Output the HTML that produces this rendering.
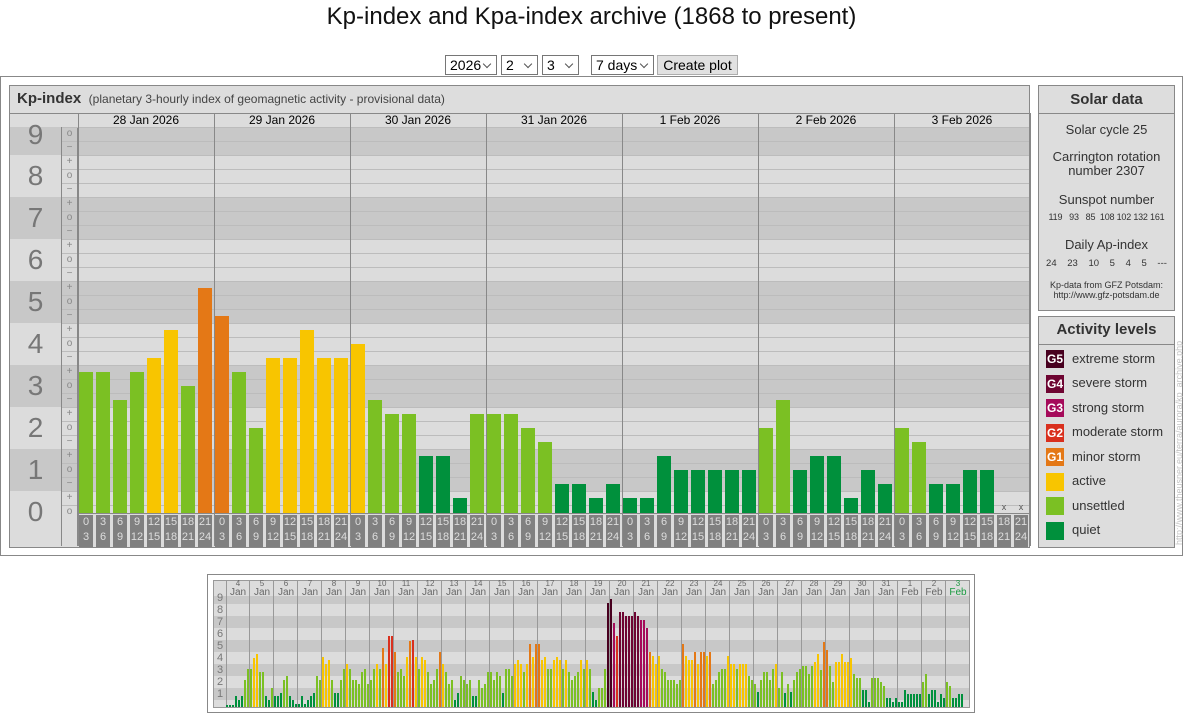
<!DOCTYPE html>
<html><head><meta charset="utf-8">
<style>
body{margin:0;width:1183px;height:715px;background:#fff;position:relative;overflow:hidden;font-family:"Liberation Sans",Arial,sans-serif;}
.a{position:absolute;}
.sel{position:absolute;top:55px;border:1px solid #767676;background:#fff;font-size:14px;line-height:18px;padding-left:4px;box-sizing:border-box;height:20px;}
.sel:after{content:"";position:absolute;right:6px;top:5px;width:5px;height:5px;border-right:1px solid #555;border-bottom:1px solid #555;transform:rotate(45deg);}
.num{position:absolute;left:10px;width:51px;text-align:center;font-size:28px;color:#777;line-height:30px;}
.sg{position:absolute;left:62px;width:15px;text-align:center;font-size:10px;color:#888;line-height:12px;}
.dt{position:absolute;top:113px;width:136px;text-align:center;font-size:12px;line-height:15px;color:#000;}
.lb{position:absolute;top:515px;width:14px;height:32px;background:#808080;color:#ddd;font-size:11px;line-height:15px;text-align:center;}
.ct{position:absolute;left:1038px;width:137px;text-align:center;color:#333;white-space:nowrap;}
.li{position:absolute;left:1072px;font-size:13px;color:#333;}
.sq{position:absolute;left:1046px;width:18px;height:18px;color:#fff;font-size:12px;font-weight:bold;line-height:18px;text-align:center;}
.sd{position:absolute;top:580px;width:24px;text-align:center;color:#666;}
</style></head><body>
<div class="a" style="left:0;top:2px;width:1183px;text-align:center;font-size:24px;line-height:30px;color:#111">Kp-index and Kpa-index archive (1868 to present)</div>
<div class="sel" style="left:445px;width:52px">2026</div>
<div class="sel" style="left:501px;width:37px">2</div>
<div class="sel" style="left:542px;width:37px">3</div>
<div class="sel" style="left:591px;width:63px">7 days</div>
<div class="a" style="left:657px;top:55px;width:81px;height:20px;box-sizing:border-box;border:1px solid #adadad;background:#e1e1e1;font-size:14px;line-height:18px;text-align:center">Create plot</div>

<div class="a" style="left:0;top:76px;width:1181px;height:478px;border:1px solid #888"></div>
<div class="a" style="left:9px;top:85px;width:1019px;height:461px;border:1px solid #888;background:#ddd"></div>
<div class="a" style="left:17px;top:90px;font-size:15px;font-weight:bold;color:#333;line-height:18px">Kp-index <span style="font-weight:normal;font-size:12px;color:#444">&nbsp;(planetary 3-hourly index of geomagnetic activity - provisional data)</span></div>

<svg class="a" id="sv" style="left:0;top:0" width="1183" height="715"></svg>

<div class="num" style="top:120px">9</div><div class="num" style="top:161px">8</div><div class="num" style="top:203px">7</div><div class="num" style="top:245px">6</div><div class="num" style="top:287px">5</div><div class="num" style="top:329px">4</div><div class="num" style="top:371px">3</div><div class="num" style="top:413px">2</div><div class="num" style="top:455px">1</div><div class="num" style="top:497px">0</div>
<div id="sgs"></div>

<div class="dt" style="left:78px">28 Jan 2026</div><div class="dt" style="left:214px">29 Jan 2026</div><div class="dt" style="left:350px">30 Jan 2026</div><div class="dt" style="left:486px">31 Jan 2026</div><div class="dt" style="left:622px">1 Feb 2026</div><div class="dt" style="left:758px">2 Feb 2026</div><div class="dt" style="left:894px">3 Feb 2026</div>
<div id="lbs">
<div class="lb" style="left:79px">0<br>3</div><div class="lb" style="left:96px">3<br>6</div><div class="lb" style="left:113px">6<br>9</div><div class="lb" style="left:130px">9<br>12</div><div class="lb" style="left:147px">12<br>15</div><div class="lb" style="left:164px">15<br>18</div><div class="lb" style="left:181px">18<br>21</div><div class="lb" style="left:198px">21<br>24</div>
<div class="lb" style="left:215px">0<br>3</div><div class="lb" style="left:232px">3<br>6</div><div class="lb" style="left:249px">6<br>9</div><div class="lb" style="left:266px">9<br>12</div><div class="lb" style="left:283px">12<br>15</div><div class="lb" style="left:300px">15<br>18</div><div class="lb" style="left:317px">18<br>21</div><div class="lb" style="left:334px">21<br>24</div>
<div class="lb" style="left:351px">0<br>3</div><div class="lb" style="left:368px">3<br>6</div><div class="lb" style="left:385px">6<br>9</div><div class="lb" style="left:402px">9<br>12</div><div class="lb" style="left:419px">12<br>15</div><div class="lb" style="left:436px">15<br>18</div><div class="lb" style="left:453px">18<br>21</div><div class="lb" style="left:470px">21<br>24</div>
<div class="lb" style="left:487px">0<br>3</div><div class="lb" style="left:504px">3<br>6</div><div class="lb" style="left:521px">6<br>9</div><div class="lb" style="left:538px">9<br>12</div><div class="lb" style="left:555px">12<br>15</div><div class="lb" style="left:572px">15<br>18</div><div class="lb" style="left:589px">18<br>21</div><div class="lb" style="left:606px">21<br>24</div>
<div class="lb" style="left:623px">0<br>3</div><div class="lb" style="left:640px">3<br>6</div><div class="lb" style="left:657px">6<br>9</div><div class="lb" style="left:674px">9<br>12</div><div class="lb" style="left:691px">12<br>15</div><div class="lb" style="left:708px">15<br>18</div><div class="lb" style="left:725px">18<br>21</div><div class="lb" style="left:742px">21<br>24</div>
<div class="lb" style="left:759px">0<br>3</div><div class="lb" style="left:776px">3<br>6</div><div class="lb" style="left:793px">6<br>9</div><div class="lb" style="left:810px">9<br>12</div><div class="lb" style="left:827px">12<br>15</div><div class="lb" style="left:844px">15<br>18</div><div class="lb" style="left:861px">18<br>21</div><div class="lb" style="left:878px">21<br>24</div>
<div class="lb" style="left:895px">0<br>3</div><div class="lb" style="left:912px">3<br>6</div><div class="lb" style="left:929px">6<br>9</div><div class="lb" style="left:946px">9<br>12</div><div class="lb" style="left:963px">12<br>15</div><div class="lb" style="left:980px">15<br>18</div><div class="lb" style="left:997px">18<br>21</div><div class="lb" style="left:1014px">21<br>24</div>
</div>
<div class="a" style="left:997px;top:502px;width:14px;text-align:center;font-size:9px;color:#555">x</div>
<div class="a" style="left:1014px;top:502px;width:14px;text-align:center;font-size:9px;color:#555">x</div>

<!-- Solar data -->
<div class="a" style="left:1038px;top:85px;width:135px;height:224px;border:1px solid #888;background:#ddd"></div>
<div class="a" style="left:1039px;top:113px;width:135px;border-top:1px solid #888"></div>
<div class="ct" style="top:91px;font-size:15px;font-weight:bold;color:#333">Solar data</div>
<div class="ct" style="top:122px;font-size:13px">Solar cycle 25</div>
<div class="ct" style="top:150px;font-size:13px;line-height:14px">Carrington rotation<br>number 2307</div>
<div class="ct" style="top:192px;font-size:13px">Sunspot number</div>
<div class="ct" style="top:212px;font-size:9px;letter-spacing:-0.2px">119&nbsp;&nbsp; 93 &nbsp;&nbsp;85 &nbsp;108 102 132 161</div>
<div class="ct" style="top:237px;font-size:13px">Daily Ap-index</div>
<div class="ct" style="top:258px;font-size:9.5px;word-spacing:8px">24 23 10 5 4 5 ---</div>
<div class="ct" style="top:280px;font-size:9px;line-height:10px">Kp-data from GFZ Potsdam:<br>http://www.gfz-potsdam.de</div>

<!-- Activity -->
<div class="a" style="left:1038px;top:316px;width:135px;height:230px;border:1px solid #888;background:#ddd"></div>
<div class="a" style="left:1039px;top:344px;width:135px;border-top:1px solid #888"></div>
<div class="ct" style="top:321px;font-size:15px;font-weight:bold;color:#333">Activity levels</div>
<div class="sq" style="top:350px;background:#48001f">G5</div><div class="li" style="top:351px">extreme storm</div>
<div class="sq" style="top:375px;background:#6e0532">G4</div><div class="li" style="top:375px">severe storm</div>
<div class="sq" style="top:399px;background:#a50a5a">G3</div><div class="li" style="top:400px">strong storm</div>
<div class="sq" style="top:424px;background:#d9301e">G2</div><div class="li" style="top:424px">moderate storm</div>
<div class="sq" style="top:448px;background:#e47816">G1</div><div class="li" style="top:449px">minor storm</div>
<div class="sq" style="top:473px;background:#f8c500"></div><div class="li" style="top:473px">active</div>
<div class="sq" style="top:497px;background:#7bc023"></div><div class="li" style="top:498px">unsettled</div>
<div class="sq" style="top:522px;background:#00903c"></div><div class="li" style="top:522px">quiet</div>
<div class="a" style="left:1174px;top:545px;transform-origin:0 0;transform:rotate(-90deg);font-size:9px;color:#c4c4c4;white-space:nowrap">http://www.theusner.eu/terra/aurora/kp_archive.php</div>

<!-- small chart -->
<div class="a" style="left:207px;top:574px;width:766px;height:137px;border:1px solid #888"></div>
<div class="a" style="left:213px;top:580px;width:755px;height:126px;border:1px solid #999;background:#ddd"></div>
<svg class="a" id="sv2" style="left:0;top:0" width="1183" height="715"></svg>
<div id="sdates">
<div class="sd" style="left:226px"><div style="font-size:8px;line-height:8px">4</div><div style="font-size:10px;line-height:10px">Jan</div></div>
<div class="sd" style="left:250px"><div style="font-size:8px;line-height:8px">5</div><div style="font-size:10px;line-height:10px">Jan</div></div>
<div class="sd" style="left:274px"><div style="font-size:8px;line-height:8px">6</div><div style="font-size:10px;line-height:10px">Jan</div></div>
<div class="sd" style="left:298px"><div style="font-size:8px;line-height:8px">7</div><div style="font-size:10px;line-height:10px">Jan</div></div>
<div class="sd" style="left:322px"><div style="font-size:8px;line-height:8px">8</div><div style="font-size:10px;line-height:10px">Jan</div></div>
<div class="sd" style="left:346px"><div style="font-size:8px;line-height:8px">9</div><div style="font-size:10px;line-height:10px">Jan</div></div>
<div class="sd" style="left:370px"><div style="font-size:8px;line-height:8px">10</div><div style="font-size:10px;line-height:10px">Jan</div></div>
<div class="sd" style="left:394px"><div style="font-size:8px;line-height:8px">11</div><div style="font-size:10px;line-height:10px">Jan</div></div>
<div class="sd" style="left:418px"><div style="font-size:8px;line-height:8px">12</div><div style="font-size:10px;line-height:10px">Jan</div></div>
<div class="sd" style="left:442px"><div style="font-size:8px;line-height:8px">13</div><div style="font-size:10px;line-height:10px">Jan</div></div>
<div class="sd" style="left:466px"><div style="font-size:8px;line-height:8px">14</div><div style="font-size:10px;line-height:10px">Jan</div></div>
<div class="sd" style="left:490px"><div style="font-size:8px;line-height:8px">15</div><div style="font-size:10px;line-height:10px">Jan</div></div>
<div class="sd" style="left:514px"><div style="font-size:8px;line-height:8px">16</div><div style="font-size:10px;line-height:10px">Jan</div></div>
<div class="sd" style="left:538px"><div style="font-size:8px;line-height:8px">17</div><div style="font-size:10px;line-height:10px">Jan</div></div>
<div class="sd" style="left:562px"><div style="font-size:8px;line-height:8px">18</div><div style="font-size:10px;line-height:10px">Jan</div></div>
<div class="sd" style="left:586px"><div style="font-size:8px;line-height:8px">19</div><div style="font-size:10px;line-height:10px">Jan</div></div>
<div class="sd" style="left:610px"><div style="font-size:8px;line-height:8px">20</div><div style="font-size:10px;line-height:10px">Jan</div></div>
<div class="sd" style="left:634px"><div style="font-size:8px;line-height:8px">21</div><div style="font-size:10px;line-height:10px">Jan</div></div>
<div class="sd" style="left:658px"><div style="font-size:8px;line-height:8px">22</div><div style="font-size:10px;line-height:10px">Jan</div></div>
<div class="sd" style="left:682px"><div style="font-size:8px;line-height:8px">23</div><div style="font-size:10px;line-height:10px">Jan</div></div>
<div class="sd" style="left:706px"><div style="font-size:8px;line-height:8px">24</div><div style="font-size:10px;line-height:10px">Jan</div></div>
<div class="sd" style="left:730px"><div style="font-size:8px;line-height:8px">25</div><div style="font-size:10px;line-height:10px">Jan</div></div>
<div class="sd" style="left:754px"><div style="font-size:8px;line-height:8px">26</div><div style="font-size:10px;line-height:10px">Jan</div></div>
<div class="sd" style="left:778px"><div style="font-size:8px;line-height:8px">27</div><div style="font-size:10px;line-height:10px">Jan</div></div>
<div class="sd" style="left:802px"><div style="font-size:8px;line-height:8px">28</div><div style="font-size:10px;line-height:10px">Jan</div></div>
<div class="sd" style="left:826px"><div style="font-size:8px;line-height:8px">29</div><div style="font-size:10px;line-height:10px">Jan</div></div>
<div class="sd" style="left:850px"><div style="font-size:8px;line-height:8px">30</div><div style="font-size:10px;line-height:10px">Jan</div></div>
<div class="sd" style="left:874px"><div style="font-size:8px;line-height:8px">31</div><div style="font-size:10px;line-height:10px">Jan</div></div>
<div class="sd" style="left:898px"><div style="font-size:8px;line-height:8px">1</div><div style="font-size:10px;line-height:10px">Feb</div></div>
<div class="sd" style="left:922px"><div style="font-size:8px;line-height:8px">2</div><div style="font-size:10px;line-height:10px">Feb</div></div>
<div class="sd" style="left:946px;color:#1a9a40"><div style="font-size:8px;line-height:8px">3</div><div style="font-size:10px;line-height:10px">Feb</div></div>
</div>
<div class="a" style="left:214px;top:592px;width:12px;font-size:11px;line-height:12px;color:#777;text-align:center">9<br>8<br>7<br>6<br>5<br>4<br>3<br>2<br>1</div>

<script>
var NS="http://www.w3.org/2000/svg";
function R(s,x,y,w,h,c){var r=document.createElementNS(NS,"rect");r.setAttribute("x",x);r.setAttribute("y",y);r.setAttribute("width",w);r.setAttribute("height",h);r.setAttribute("fill",c);s.appendChild(r);}
var sv=document.getElementById("sv");
for(var k=0;k<=9;k++){var bTop=512-14*(3*k+1)-7,bBot=512-14*(3*k-1)+7;if(k==9)bTop=127;if(k==0){bTop=491;bBot=513;}
R(sv,10,bTop,1019,bBot-bTop,k%2?"#c8c8c8":"#dcdcdc");}
R(sv,10,513,1019,33,"#dcdcdc");
for(var v=0;v<27;v++){var yy=512-14*v-7;R(sv,62,yy,967,1,"#bcbcbc");}
R(sv,61,113,1,433,"#888");R(sv,77,113,1,433,"#888");
R(sv,10,113,1019,14,"#dcdcdc");R(sv,10,113,1019,1,"#888");R(sv,62,127,967,1,"#bcbcbc");
for(var d=0;d<8;d++)R(sv,78+136*d,113,1,433,"#888");
R(sv,78,513,951,1,"#888");
var col=function(v){return v<=4?"#00903c":v<=10?"#7bc023":v<=13?"#f8c500":v<=16?"#e47816":v<=19?"#d9301e":v<=22?"#a50a5a":v<=25?"#6e0532":"#48001f";};
var data=[[10,10,8,10,11,13,9,16],[14,10,6,11,11,13,11,11],[12,8,7,7,4,4,1,7],[7,7,6,5,2,2,1,2],[1,1,4,3,3,3,3,3],[6,8,3,4,4,1,3,2],[6,5,2,2,3,3,-1,-1]];
for(d=0;d<7;d++)for(var i=0;i<8;i++){var v2=data[d][i];if(v2<0)continue;var t=512-14*v2;R(sv,79+136*d+17*i,t,14,513-t,col(v2));}
var sg=document.getElementById("sgs"),hs="";
for(v=0;v<=27;v++){var m=v%3;var s=m==0?"o":m==1?"+":"−";hs+='<div class="sg" style="top:'+(512-14*v-6)+'px">'+s+'</div>';}
sg.innerHTML=hs;
var s2=document.getElementById("sv2");
for(k=0;k<=9;k++){var tp=700-12*k,bt=tp+12;if(k==9)tp=596;if(k==0)bt=707;R(s2,214,tp,755,bt-tp,k%2?"#c8c8c8":"#dcdcdc");}
R(s2,214,581,755,15,"#dcdcdc");
for(d=0;d<=31;d++)R(s2,226+24*d-(d==0?0:1),581,1,126,"#999");
var sd=[[.1,.1,.1,.8,.5,.8,2.2,3.1],[3.1,4,4.3,2.8,2.8,.8,.5,1.5],[.8,.8,1.1,2.2,2.5,.8,.5,.2],[.2,.8,.2,.5,.8,1.1,2.5,2.2],[4.1,3.5,3.8,2.2,1.1,1.1,2.2,3.1],[3.5,3.1,2.2,2.2,1.8,2.8,3.1,1.8],[2.2,3.1,3.5,3.1,4.8,3.5,5.8,5.8],[4.5,2.8,3.1,2.5,4.1,5.4,5.5,4.1],[3.1,4.1,3.8,2.8,1.8,2.2,3.1,4.5],[3.5,2.8,1.8,2.2,.5,1.1,2.5,2.2],[1.8,2.2,.8,.8,2.2,1.5,1.8,2.8],[2.8,2.2,2.8,2.5,1.1,3.1,3.1,2.5],[3.5,3.8,3.5,2.8,3.5,5.2,4.1,5.2],[5.2,3.8,4.1,3.1,3.1,3.8,4.1,3.8],[3.1,3.8,2.8,2.2,2.5,2.8,3.8,3.1],[3.8,3.1,1.2,.5,1.5,1.5,3.1,8.6],[8.9,6.9,5.8,7.8,7.8,7.5,7.5,7.5],[7.8,7.5,7.2,7.2,6.5,4.5,4.2,3.5],[4.2,3.1,2.8,2.2,2.2,2.2,1.8,2.2],[5.2,4.2,3.8,3.8,4.5,3.5,4.5,4.5],[4.2,4.5,1.8,2.2,2.8,3.1,3.1,4.2],[3.5,3.5,3.1,3.5,3.5,3.5,2.5,2.2],[1.8,1.2,2.2,2.8,2.8,2.2,3.1,3.5],[1.5,2.8,1.1,1.8,1.2,2.2,2.8,3.1]];
for(d=0;d<7;d++)sd.push(data[d].map(function(v){return v<0?-1:v/3;}));
for(d=0;d<31;d++)for(i=0;i<8;i++){var kp=sd[d][i];if(kp<0)continue;var hh=Math.max(2,Math.round(12*kp+1));var th=Math.round(kp*3);R(s2,226+24*d+3*i,707-hh,2,hh,col(th));}
</script>
</body></html>
